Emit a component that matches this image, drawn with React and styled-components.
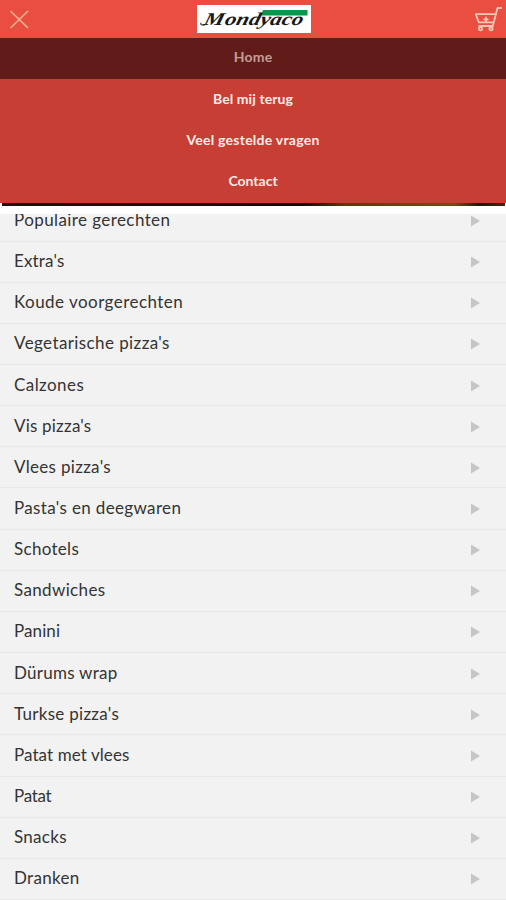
import React from "react";
import styled, { createGlobalStyle } from "styled-components";

const GlobalStyle = createGlobalStyle`
  * { box-sizing: border-box; }
  body { margin: 0; background: #fff; font-family: Lato, "Open Sans", sans-serif; overflow: hidden; }
`;

const Screen = styled.div`
  width: 506px;
  height: 900px;
  overflow: hidden;
  display: flex;
  flex-direction: column;
  background: #fff;
`;

const Header = styled.header`
  flex: none;
  height: 38px;
  display: flex;
  align-items: flex-start;
  justify-content: space-between;
  background: #e94e40;
`;

const IconButton = styled.button`
  display: block;
  width: 52px;
  height: 38px;
  padding: 0;
  border: 0;
  background: none;
  svg { display: block; }
`;

const Logo = styled.div`
  width: 114px;
  height: 28px;
  margin: 5px 0 0 1px;
  background: #fefefe;
  svg { display: block; }
`;

const LogoText = styled.text`
  font-family: "Liberation Serif", serif;
  font-style: italic;
  font-weight: bold;
  font-size: 18px;
  fill: #171717;
`;

const Menu = styled.nav`
  flex: none;
  height: 165px;
  background: #c63e34;
`;

const MenuItem = styled.a`
  display: flex;
  height: ${(p) => (p.$active ? 40.5 : 41.2)}px;
  align-items: center;
  justify-content: center;
  padding-bottom: ${(p) => (p.$active ? 3 : 1)}px;
  font-size: 14px;
  font-weight: 700;
  letter-spacing: ${(p) => p.$spacing || 0}px;
  color: ${(p) => (p.$active ? "#c39d98" : "#fdebe7")};
  background: ${(p) => (p.$active ? "#611c19" : "transparent")};
`;

const PhotoEdge = styled.div`
  flex: none;
  height: 3px;
  margin: 0 1px 0 2px;
  background: linear-gradient(90deg, #2b0b06, #210704 45%, #160805 60%, #67350f 68%, #7a4a16 90%, #2a1008 95%, #50260d);
`;

const List = styled.ul`
  flex: 1;
  min-height: 0;
  margin: 8px 0 0;
  padding: 0;
  list-style: none;
  overflow: hidden;
  display: flex;
  flex-direction: column;
  justify-content: flex-end;
  background: #f2f2f2;
`;

const Row = styled.li`
  flex: none;
  height: 41.17px;
  display: flex;
  align-items: center;
  justify-content: space-between;
  padding: 0 26px 1px 14px;
  border-bottom: 1px solid #e8e8e8;
  font-size: 17px;
  line-height: 22px;
  letter-spacing: ${(p) => p.$spacing}px;
  color: #343434;
  svg { display: block; margin-top: 2px; }
`;

const items = [
  ["Populaire gerechten", 0.41],
  ["Extra's", 0.15],
  ["Koude voorgerechten", 0.46],
  ["Vegetarische pizza's", 0.4],
  ["Calzones", 0.42],
  ["Vis pizza's", 0.2],
  ["Vlees pizza's", 0.3],
  ["Pasta's en deegwaren", 0.35],
  ["Schotels", 0.3],
  ["Sandwiches", 0.35],
  ["Panini", 0.1],
  ["Dürums wrap", 0.25],
  ["Turkse pizza's", 0.28],
  ["Patat met vlees", 0.08],
  ["Patat", -0.3],
  ["Snacks", 0.3],
  ["Dranken", 0.3],
];

function CloseIcon() {
  return (
    <svg width="52" height="38" fill="none" stroke="#f8b092" strokeWidth="1.7">
      <path d="M10.5 11 28 28M28 11 10.5 28" />
    </svg>
  );
}

function CartIcon() {
  return (
    <svg width="52" height="38" fill="none" stroke="#fbc6b5" strokeWidth="1.8" strokeLinejoin="round">
      <path d="M48 8h-4.5l-4.7 18H24.5M41.5 14.2H21.8l3 8.1H39" />
      <circle cx="26.5" cy="28.8" r="1.6" />
      <circle cx="37" cy="28.8" r="1.6" />
      <path d="M32 16.8v5M29.5 19.3h5" />
    </svg>
  );
}

function Brand() {
  return (
    <Logo>
      <svg width="114" height="28" viewBox="0 0 114 28">
        <path d="M66 5h44.5v5.5H64Z" fill="#07964b" />
        <g transform="translate(5.4 0) skewX(-15)">
          <LogoText y="20">
            <tspan x="6" textLength="20" lengthAdjust="spacingAndGlyphs">M</tspan>
            <tspan x="27" textLength="78" lengthAdjust="spacingAndGlyphs">ondyaco</tspan>
          </LogoText>
        </g>
        <path d="M8 19.5c-1.5 1-4.5.7-4.2-1.2" fill="none" stroke="#222" strokeWidth="1.2" strokeLinecap="round" />
      </svg>
    </Logo>
  );
}

export default function App() {
  return (
    <>
      <GlobalStyle />
      <Screen>
        <Header>
          <IconButton aria-label="Sluiten"><CloseIcon /></IconButton>
          <Brand />
          <IconButton aria-label="Winkelwagen"><CartIcon /></IconButton>
        </Header>
        <Menu>
          <MenuItem $active $spacing={0.2}>Home</MenuItem>
          <MenuItem $spacing={0.1}>Bel mij terug</MenuItem>
          <MenuItem $spacing={0.25}>Veel gestelde vragen</MenuItem>
          <MenuItem>Contact</MenuItem>
        </Menu>
        <PhotoEdge />
        <List>
          {items.map(([name, spacing]) => (
            <Row key={name} $spacing={spacing}>
              {name}
              <svg width="9" height="12"><path d="M0 .5 9 6 0 11.5Z" fill="#c5c5c5" /></svg>
            </Row>
          ))}
        </List>
      </Screen>
    </>
  );
}
